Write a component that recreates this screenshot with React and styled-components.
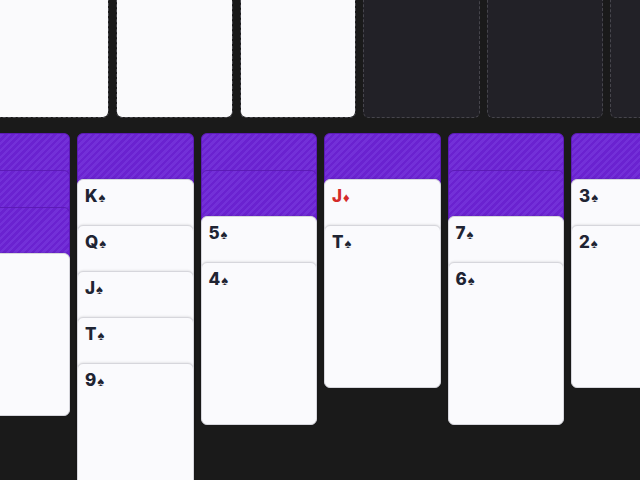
import React from "react";
import styled, { createGlobalStyle } from "styled-components";

const CARD_W = 116.5;
const CARD_H = 163;

const GlobalStyle = createGlobalStyle`
  html, body {
    margin: 0;
    padding: 0;
    background: #1a1a1a;
    overflow: hidden;
  }
  body {
    font-family: Inter, "Liberation Sans", sans-serif;
  }
`;

const Board = styled.div`
  width: 640px;
  height: 480px;
  overflow: hidden;
  background: #1a1a1a;
  display: flex;
  flex-direction: column;
  gap: 15px;
`;

const TopRow = styled.div`
  display: flex;
  gap: 7px;
  margin-top: -45px;
  margin-left: -7.5px;
`;

const Slot = styled.div`
  flex: 0 0 ${CARD_W}px;
  height: ${CARD_H}px;
  box-sizing: border-box;
  border-radius: 6px;
  border: 1px dashed #46454c;
  background: #222127;
`;

const PlacedCard = styled.div`
  flex: 0 0 ${CARD_W}px;
  height: ${CARD_H}px;
  box-sizing: border-box;
  border-radius: 6px;
  border: 1px dashed #4a4a50;
  border-top: none;
  background: #fafafc;
  background-clip: padding-box;
`;

const Tableau = styled.div`
  display: flex;
  gap: 7px;
  margin-left: -46.5px;
  align-items: flex-start;
`;

const Column = styled.div`
  flex: 0 0 ${CARD_W}px;
  display: flex;
  flex-direction: column;
`;

const FaceDown = styled.div`
  height: ${CARD_H}px;
  box-sizing: border-box;
  border-radius: 6px;
  border: 1px solid #5c1bb6;
  background-color: #6a22d0;
  background-image: repeating-linear-gradient(
    135deg,
    #6a22d0 0px,
    #6a22d0 2.5px,
    #7330d8 2.5px,
    #7330d8 5px
  );
  margin-top: ${(p) => (p.$first ? 0 : 37 - CARD_H)}px;
`;

const FaceUp = styled.div`
  height: ${CARD_H}px;
  box-sizing: border-box;
  border-radius: 6px;
  border: 1px solid #d6d6dc;
  background: #fafafd;
  padding: 6px 7px;
  margin-top: ${(p) => (p.$first ? 0 : 46 - CARD_H)}px;
  box-shadow: 0 -1px 2px rgba(0, 0, 0, 0.08);
`;

const Label = styled.div`
  display: flex;
  align-items: baseline;
  gap: 1px;
  font-family: Inter, "Liberation Sans", sans-serif;
  font-weight: 800;
  color: ${(p) => (p.$red ? "#d42a2a" : "#1f2433")};
  line-height: 20px;
`;

const Rank = styled.span`
  font-size: 17px;
`;

const Suit = styled.span`
  font-size: 13px;
`;

// col 1 shows only the right part of its open card, so its label is off screen
const columns = [
  { down: 3, up: [[null, null]] },
  { down: 1, up: [["K", "♠"], ["Q", "♠"], ["J", "♠"], ["T", "♠"], ["9", "♠"]] },
  { down: 2, up: [["5", "♠"], ["4", "♠"]] },
  { down: 1, up: [["J", "♦"], ["T", "♠"]] },
  { down: 2, up: [["7", "♠"], ["6", "♠"]] },
  { down: 1, up: [["3", "♠"], ["2", "♠"]] },
];

const Card = ({ rank, suit, first }) => {
  const red = suit === "♦" || suit === "♥";
  return (
    <FaceUp $first={first}>
      {rank && (
        <Label $red={red}>
          <Rank>{rank}</Rank>
          <Suit>{suit}</Suit>
        </Label>
      )}
    </FaceUp>
  );
};

const App = () => {
  return (
    <>
      <GlobalStyle />
      <Board>
        <TopRow>
          <PlacedCard />
          <PlacedCard />
          <PlacedCard />
          <Slot />
          <Slot />
          <Slot />
        </TopRow>
        <Tableau>
          {columns.map((col, i) => (
            <Column key={i}>
              {Array.from({ length: col.down }).map((_, j) => (
                <FaceDown key={"d" + j} $first={j === 0} />
              ))}
              {col.up.map(([rank, suit], j) => (
                <Card
                  key={"u" + j}
                  rank={rank}
                  suit={suit}
                  first={col.down === 0 && j === 0}
                />
              ))}
            </Column>
          ))}
        </Tableau>
      </Board>
    </>
  );
};

export default App;
